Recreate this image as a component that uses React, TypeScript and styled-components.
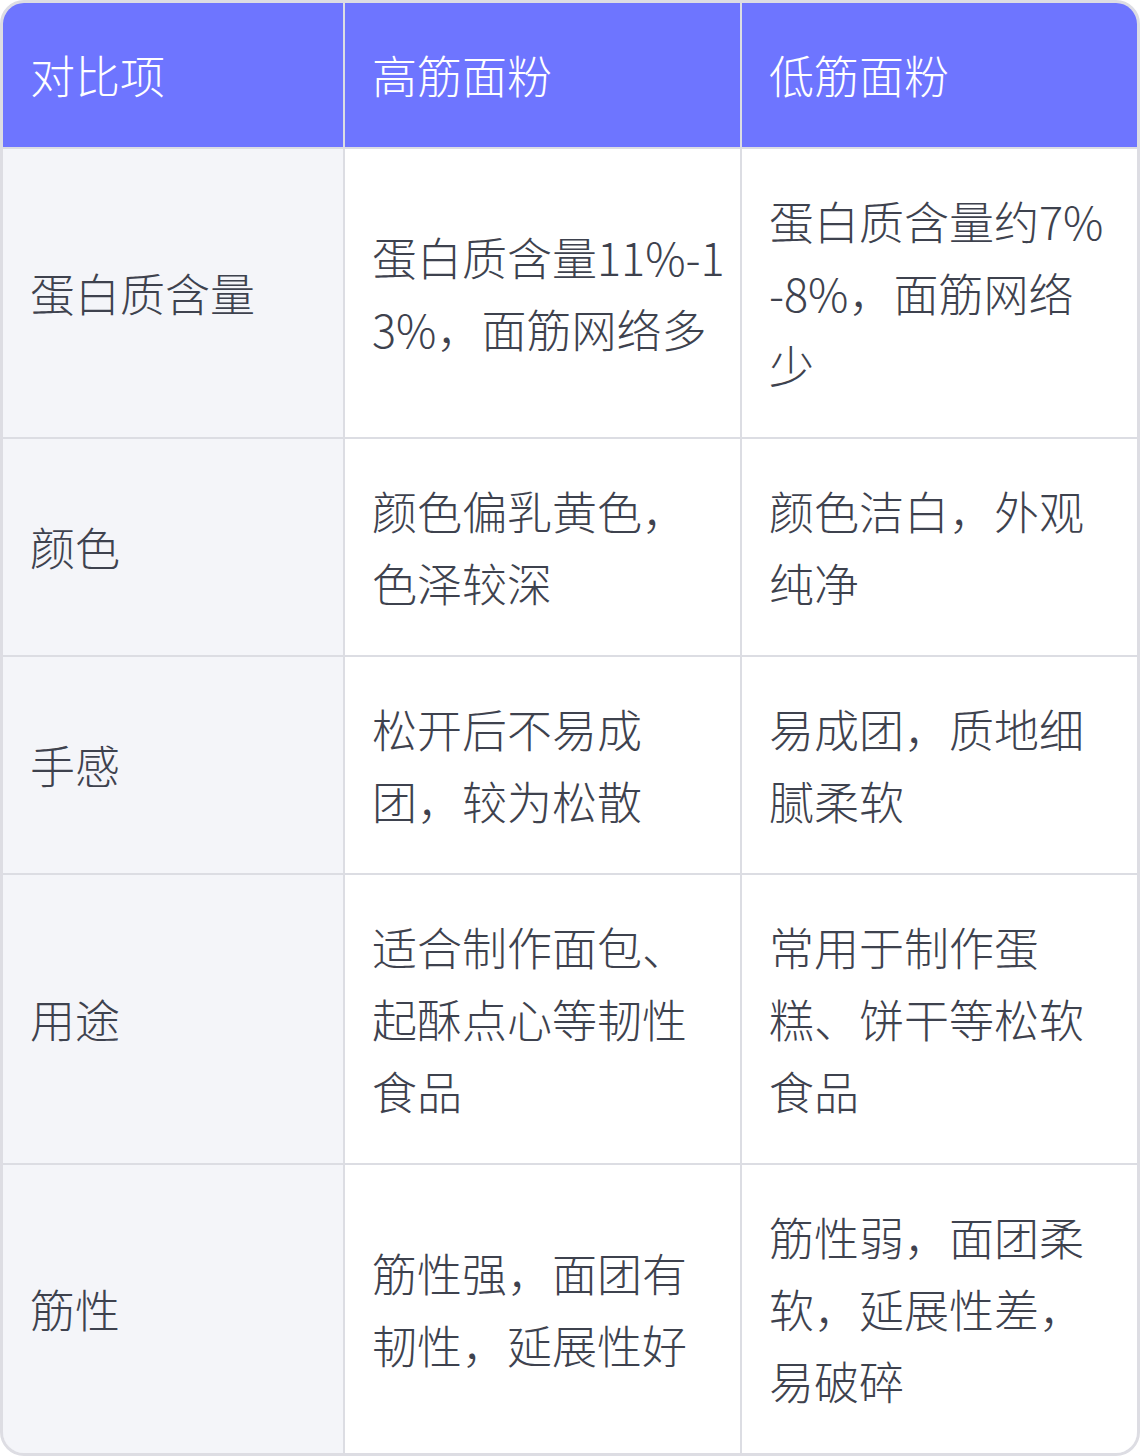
import React from "react";
import styled, { createGlobalStyle } from "styled-components";

const Global = createGlobalStyle`
  html, body { margin: 0; padding: 0; background: #ffffff; }
  body { font-family: "Noto Sans CJK SC", "Noto Sans", sans-serif; }
`;

const Frame = styled.div`
  width: 1140px;
  box-sizing: border-box;
  border: 3px solid #dddde3;
  border-radius: 24px;
  overflow: hidden;
`;

const Grid = styled.div`
  display: grid;
  grid-template-columns: 340px 395px 395px;
  gap: 2px;
  background: #dcdde3;
`;

const Cell = styled.div<{ $head?: boolean; $first?: boolean; $wide?: boolean }>`
  box-sizing: border-box;
  padding: 36px ${(p) => (p.$wide ? "10px" : "28px")} 36px 27px;
  font-size: 45px;
  line-height: 72px;
  font-weight: 300;
  word-break: break-all;
  display: flex;
  align-items: center;
  color: ${(p) => (p.$head ? "#ffffff" : "#3e424e")};
  background: ${(p) => (p.$head ? "#6e75ff" : p.$first ? "#f4f5f9" : "#ffffff")};
`;

const head = ["对比项", "高筋面粉", "低筋面粉"];
const rows = [
  ["蛋白质含量", "蛋白质含量11%-13%，面筋网络多", "蛋白质含量约7%-8%，面筋网络少"],
  ["颜色", "颜色偏乳黄色，色泽较深", "颜色洁白，外观纯净"],
  ["手感", "松开后不易成团，较为松散", "易成团，质地细腻柔软"],
  ["用途", "适合制作面包、起酥点心等韧性食品", "常用于制作蛋糕、饼干等松软食品"],
  ["筋性", "筋性强，面团有韧性，延展性好", "筋性弱，面团柔软，延展性差，易破碎"],
];

export default function App() {
  return (
    <>
      <Global />
      <Frame>
        <Grid>
          {head.map((h, i) => (
            <Cell key={h} $head $wide={i === 1}>
              {h}
            </Cell>
          ))}
          {rows.map((r) =>
            r.map((c, i) => (
              <Cell key={r[0] + i} $first={i === 0} $wide={i === 1}>
                {c}
              </Cell>
            ))
          )}
        </Grid>
      </Frame>
    </>
  );
}
